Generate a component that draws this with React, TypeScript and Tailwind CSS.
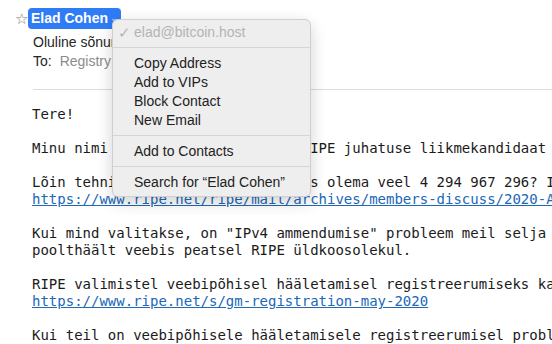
import React from "react";

const mono = { fontFamily: '"DejaVu Sans Mono", "Liberation Mono", monospace' };
const sans = { fontFamily: '"Liberation Sans", Arial, sans-serif' };

type Line = { text: string; link?: boolean };

const body: Line[] = [
  { text: "Tere!" },
  { text: "" },
  { text: "Minu nimi on Elad Cohen ja olen RIPE juhatuse liikmekandidaat 2020. aastal." },
  { text: "" },
  { text: "Lõin tehnilise arutelu: miks peaks olema veel 4 294 967 296? IPv4 aadressi?" },
  { text: "https://www.ripe.net/ripe/mail/archives/members-discuss/2020-April/", link: true },
  { text: "" },
  { text: "Kui mind valitakse, on \"IPv4 ammendumise\" probleem meil selja taga. Andke oma" },
  { text: "poolthäält veebis peatsel RIPE üldkoosolekul." },
  { text: "" },
  { text: "RIPE valimistel veebipõhisel hääletamisel registreerumiseks kasutage linki:" },
  { text: "https://www.ripe.net/s/gm-registration-may-2020", link: true },
  { text: "" },
  { text: "Kui teil on veebipõhisele hääletamisele registreerumisel probleeme, kirjutage." },
];

function Separator() {
  return (
    <div className="h-[12px] flex items-center">
      <div className="w-full h-[2px] border-t border-[#d6d6d6] border-b-white" />
    </div>
  );
}

function Item({ label }: { label: string }) {
  return <div className="h-[19px] leading-[19px] pl-[21px] text-[14px] text-[#222]">{label}</div>;
}

function ContactMenu() {
  return (
    <div
      className="absolute left-[112px] top-[19px] w-[199px] h-[178px] rounded-[6px] bg-[#eeeeee] border border-[#cfcfcf] shadow-[0_5px_16px_rgba(0,0,0,0.18)] pt-[3px]"
      style={sans}
    >
      <div className="h-[19px] leading-[19px] flex text-[14px] text-[#b4b4b4]">
        <span className="w-[21px] pl-[5px] text-[15px]">✓</span>
        <span>elad@bitcoin.host</span>
      </div>
      <Separator />
      <Item label="Copy Address" />
      <Item label="Add to VIPs" />
      <Item label="Block Contact" />
      <Item label="New Email" />
      <Separator />
      <Item label="Add to Contacts" />
      <Separator />
      <Item label="Search for “Elad Cohen”" />
    </div>
  );
}

export default function App() {
  return (
    <div className="relative w-[552px] h-[344px] overflow-hidden bg-white">
      {/* Message header */}
      <div className="pt-[8px]" style={sans}>
        <div className="flex items-center h-[21px]">
          <span className="w-[13px] ml-[15px] text-[15px] leading-none text-[#7a7a7a]">☆</span>
          <span className="h-[21px] px-[3px] rounded-[4px] bg-[#2f7cf6] text-white text-[14px] font-bold leading-[21px] flex items-center">
            Elad Cohen
            <span className="ml-[2px] text-[9px] font-normal text-[#cfe0fd]">⌄</span>
          </span>
        </div>
        <div className="mt-[4px] pl-[33px] h-[18px] leading-[18px] text-[14px] text-[#262626] whitespace-pre">
          Oluline sõnum RIPE valimiste kohta
        </div>
        <div className="mt-[1px] pl-[33px] h-[18px] leading-[18px] text-[14px] text-[#262626] whitespace-pre">
          To:<span className="ml-[8px] text-[#8c8c8c]">Registry</span>
        </div>
        <div className="mt-[19px] ml-[33px] h-px bg-[#dcdcdc]" />
      </div>

      {/* Message body */}
      <div className="pt-[16px] pl-[32px] text-[14px] text-[#1b1b1b]" style={mono}>
        {body.map((l, i) => (
          <div key={i} className="h-[17px] leading-[17px] whitespace-pre">
            {l.link ? <span className="text-[#2068b8] underline">{l.text}</span> : l.text}
          </div>
        ))}
      </div>

      <ContactMenu />
    </div>
  );
}
